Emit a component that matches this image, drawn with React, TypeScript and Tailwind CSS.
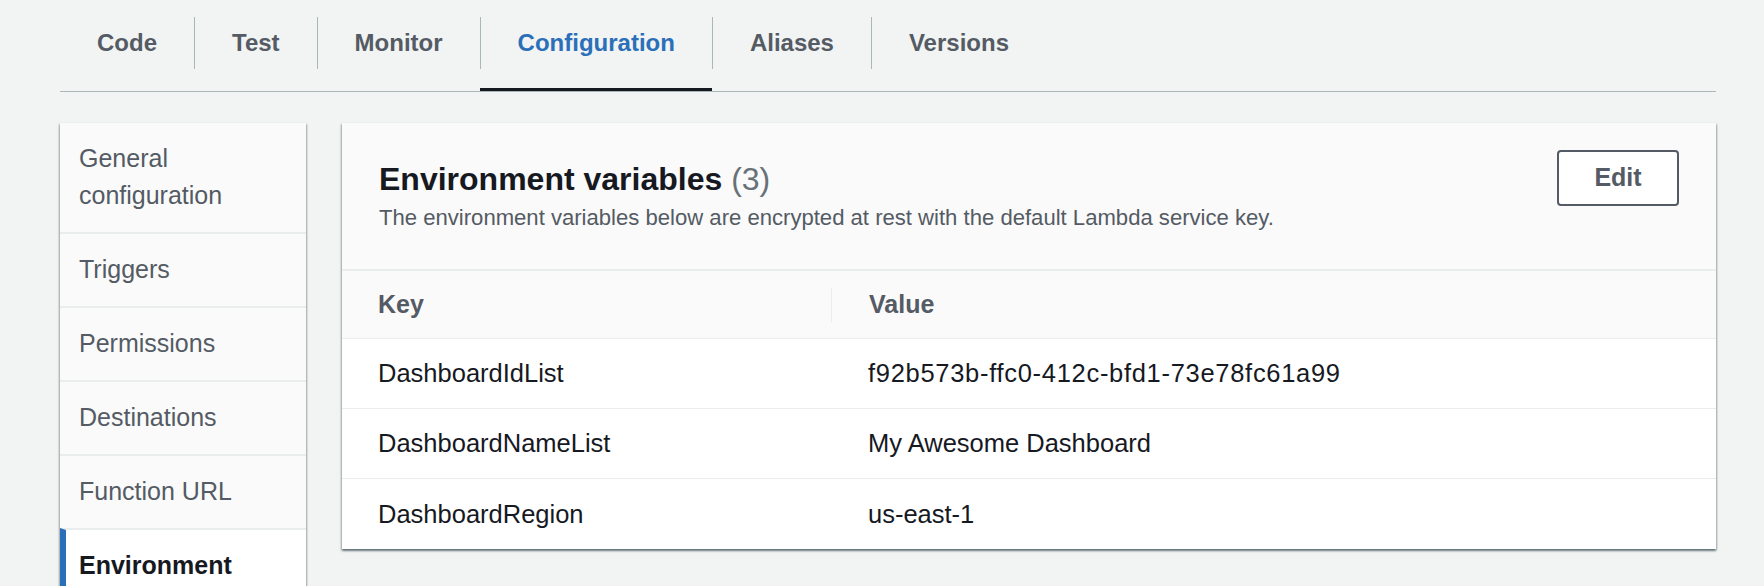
import React from "react";

const tabs = ["Code", "Test", "Monitor", "Configuration", "Aliases", "Versions"];
const activeTab = "Configuration";

const sideItems = [
  "General configuration",
  "Triggers",
  "Permissions",
  "Destinations",
  "Function URL",
  "Environment variables",
];
const activeSide = "Environment variables";

const envVars = [
  { key: "DashboardIdList", value: "f92b573b-ffc0-412c-bfd1-73e78fc61a99", mono: true },
  { key: "DashboardNameList", value: "My Awesome Dashboard", mono: false },
  { key: "DashboardRegion", value: "us-east-1", mono: false },
];

const panelShadow =
  "shadow-[0_2px_2px_0_rgba(0,28,36,0.45),1px_1px_2px_0_rgba(0,28,36,0.2),-1px_1px_2px_0_rgba(0,28,36,0.2)]";

export default function App() {
  return (
    <div className="h-[586px] overflow-hidden bg-[#f2f3f3] pl-[60px] pr-[48px] font-['Liberation_Sans',Arial,sans-serif]">
      <TabBar />
      <div className="mt-[31px] flex items-start gap-[36px]">
        <SideNav />
        <EnvPanel />
      </div>
    </div>
  );
}

function TabBar() {
  return (
    <div className="flex border-b border-[#aab7b8]">
      {tabs.map((t, i) => {
        const active = t === activeTab;
        return (
          <div key={t} className="flex h-[91px] flex-col">
            <div
              className={`mt-[17px] flex h-[52px] items-center px-[37px] text-[24px] font-bold ${
                i > 0 ? "border-l border-[#aab7b8]" : ""
              } ${active ? "text-[#2b6fb8]" : "text-[#545b64]"}`}
            >
              {t}
            </div>
            {active && <div className="mt-auto h-[3px] bg-[#16191f]" />}
          </div>
        );
      })}
    </div>
  );
}

function SideNav() {
  return (
    <div className={`w-[246px] shrink-0 bg-[#fafafa] ${panelShadow}`}>
      {sideItems.map((item, i) => {
        const active = item === activeSide;
        return (
          <div
            key={item}
            className={`pt-[17px] pb-[18px] pr-[16px] text-[25px] leading-[37px] ${
              i > 0 ? "border-t-2 border-[#eaeded]" : ""
            } ${
              active
                ? "border-l-[6px] border-l-[#2b6fb8] bg-white pl-[13px] font-bold text-[#16191f]"
                : "pl-[19px] text-[#545b64]"
            }`}
          >
            {item}
          </div>
        );
      })}
    </div>
  );
}

function EnvPanel() {
  return (
    <div className={`flex-1 bg-white ${panelShadow}`}>
      <div className="flex items-start justify-between border-b-2 border-[#eaeded] bg-[#fafafa] px-[37px] pt-[27px] pb-[36px]">
        <div className="pt-[9px]">
          <h2 className="text-[32px] font-bold leading-[40px] text-[#16191f]">
            Environment variables{" "}
            <span className="font-normal text-[#687078]">(3)</span>
          </h2>
          <p className="mt-[4px] text-[22.1px] leading-[30px] text-[#545b64]">
            The environment variables below are encrypted at rest with the default Lambda service key.
          </p>
        </div>
        <button className="flex h-[56px] w-[122px] items-center justify-center rounded-[4px] border-2 border-[#545b64] bg-white text-[25px] font-bold text-[#545b64]">
          Edit
        </button>
      </div>

      <div className="grid grid-cols-[489px_1fr]">
        <div className="flex h-[68px] items-center border-b border-[#eaeded] bg-[#fafafa] pl-[36px] text-[25px] font-bold text-[#545b64]">
          Key
        </div>
        <div className="flex h-[68px] items-center border-b border-[#eaeded] bg-[#fafafa]">
          <div className="h-[34px] w-px bg-[#eaeded]" />
          <span className="pl-[37px] text-[25px] font-bold text-[#545b64]">Value</span>
        </div>
        {envVars.map((v, i) => (
          <React.Fragment key={v.key}>
            <div
              className={`flex h-[70px] items-center pl-[36px] text-[25.5px] text-[#16191f] ${
                i < envVars.length - 1 ? "border-b border-[#eaeded]" : ""
              }`}
            >
              {v.key}
            </div>
            <div
              className={`flex h-[70px] items-center pl-[37px] text-[25.5px] text-[#16191f] ${
                v.mono ? "tracking-[0.7px]" : ""
              } ${i < envVars.length - 1 ? "border-b border-[#eaeded]" : ""}`}
            >
              {v.value}
            </div>
          </React.Fragment>
        ))}
      </div>
    </div>
  );
}
